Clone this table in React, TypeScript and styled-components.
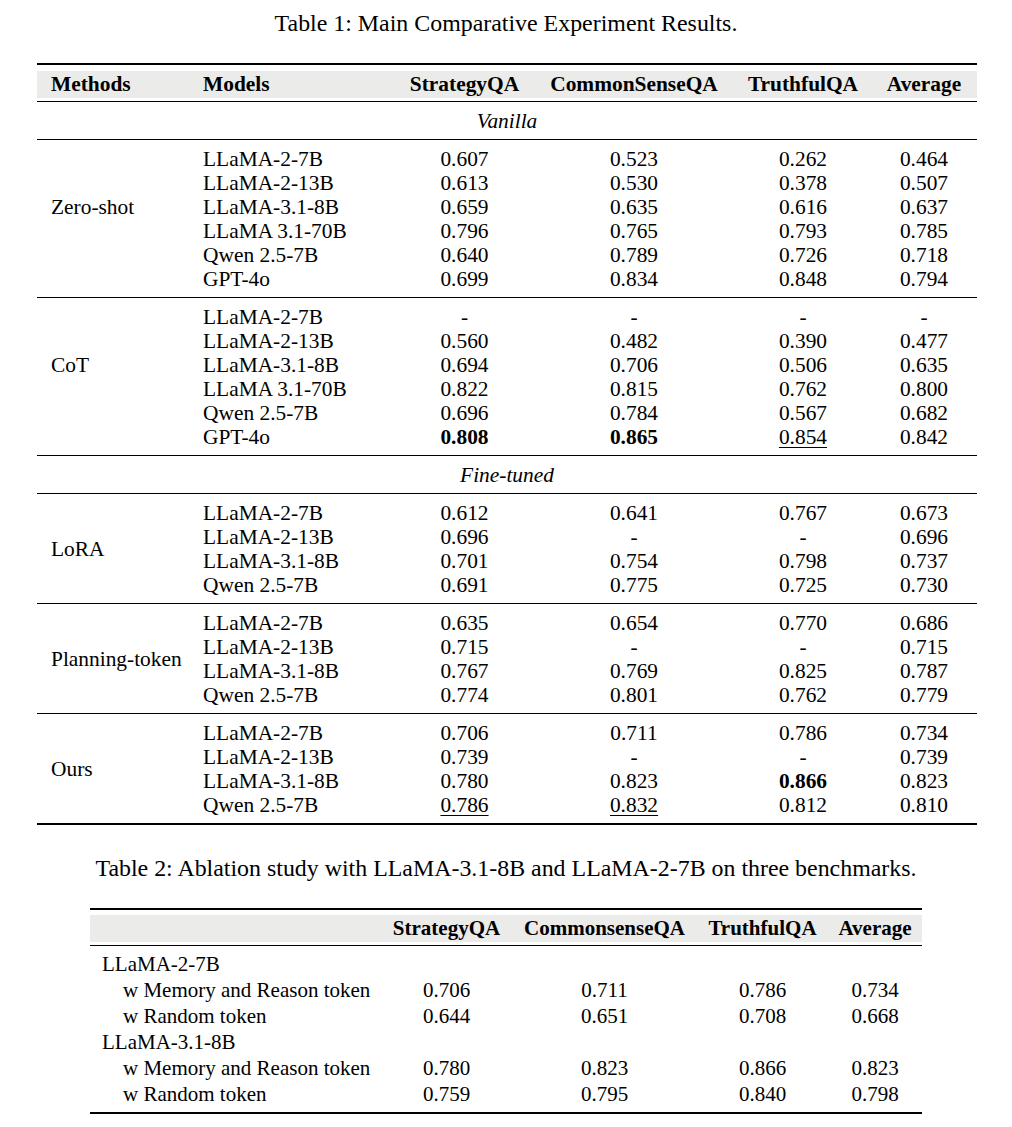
import React from "react";
import styled, { createGlobalStyle } from "styled-components";

const GlobalStyle = createGlobalStyle`
  html, body { margin: 0; padding: 0; background: #fff; }
  body { font-family: "Liberation Serif", "Times New Roman", serif; color: #000; }
`;

const Page = styled.div`
  width: 1012px;
  padding-top: 9px;
  display: flex;
  flex-direction: column;
`;

const Caption = styled.div<{ $top: number }>`
  margin-top: ${(p) => p.$top}px;
  font-size: 23.9px;
  line-height: 28px;
  text-align: center;
`;

/* ---------- Table 1 ---------- */
const T1_COLS = "153px 206px 137px 202px 136px 106px";

const Table1 = styled.div`
  width: 940px;
  margin: 26px 0 0 37px;
  border-top: 2px solid #000;
  border-bottom: 2px solid #000;
  font-size: 21.4px;
  line-height: 24px;
`;

const HeadWrap = styled.div<{ $gapTop: number }>`
  padding: ${(p) => p.$gapTop}px 0 3px;
  border-bottom: 1px solid #000;
`;

const HeadBand = styled.div<{ $cols: string }>`
  display: grid;
  grid-template-columns: ${(p) => p.$cols};
  background: #ebebe9;
  padding: 1px 0 2px;
  font-weight: bold;
`;

const Cell = styled.div<{
  $left?: number;
  $bold?: boolean;
  $under?: boolean;
}>`
  text-align: ${(p) => (p.$left !== undefined ? "left" : "center")};
  padding-left: ${(p) => p.$left ?? 0}px;
  font-weight: ${(p) => (p.$bold ? "bold" : "normal")};
  white-space: nowrap;
  & > span {
    text-decoration: ${(p) => (p.$under ? "underline" : "none")};
    text-decoration-thickness: 1px;
    text-underline-offset: 3px;
  }
`;

const HeadCell = styled(Cell)`
  font-weight: bold;
`;

const SectionRow = styled.div`
  padding: 7px 0 6px;
  border-bottom: 1px solid #000;
  text-align: center;
  font-style: italic;
`;

const Group = styled.div`
  display: grid;
  grid-template-columns: ${T1_COLS};
  padding: 7px 0 6px;
  border-bottom: 1px solid #000;
  &:last-child {
    border-bottom: none;
  }
`;

const MethodLabel = styled.div<{ $span: number }>`
  grid-column: 1;
  grid-row: 1 / span ${(p) => p.$span};
  align-self: center;
  padding-left: 14px;
  white-space: nowrap;
`;

const ModelCell = styled(Cell)`
  grid-column: 2;
`;

type Val = string | { v: string; b?: boolean; u?: boolean };

type Row = { model: string; vals: Val[] };
type GroupData = { method: string; span: number; rows: Row[] };

const G1: GroupData[] = [
  {
    method: "Zero-shot",
    span: 5,
    rows: [
      { model: "LLaMA-2-7B", vals: ["0.607", "0.523", "0.262", "0.464"] },
      { model: "LLaMA-2-13B", vals: ["0.613", "0.530", "0.378", "0.507"] },
      { model: "LLaMA-3.1-8B", vals: ["0.659", "0.635", "0.616", "0.637"] },
      { model: "LLaMA 3.1-70B", vals: ["0.796", "0.765", "0.793", "0.785"] },
      { model: "Qwen 2.5-7B", vals: ["0.640", "0.789", "0.726", "0.718"] },
      { model: "GPT-4o", vals: ["0.699", "0.834", "0.848", "0.794"] },
    ],
  },
  {
    method: "CoT",
    span: 5,
    rows: [
      { model: "LLaMA-2-7B", vals: ["-", "-", "-", "-"] },
      { model: "LLaMA-2-13B", vals: ["0.560", "0.482", "0.390", "0.477"] },
      { model: "LLaMA-3.1-8B", vals: ["0.694", "0.706", "0.506", "0.635"] },
      { model: "LLaMA 3.1-70B", vals: ["0.822", "0.815", "0.762", "0.800"] },
      { model: "Qwen 2.5-7B", vals: ["0.696", "0.784", "0.567", "0.682"] },
      {
        model: "GPT-4o",
        vals: [
          { v: "0.808", b: true },
          { v: "0.865", b: true },
          { v: "0.854", u: true },
          "0.842",
        ],
      },
    ],
  },
];

const G2: GroupData[] = [
  {
    method: "LoRA",
    span: 4,
    rows: [
      { model: "LLaMA-2-7B", vals: ["0.612", "0.641", "0.767", "0.673"] },
      { model: "LLaMA-2-13B", vals: ["0.696", "-", "-", "0.696"] },
      { model: "LLaMA-3.1-8B", vals: ["0.701", "0.754", "0.798", "0.737"] },
      { model: "Qwen 2.5-7B", vals: ["0.691", "0.775", "0.725", "0.730"] },
    ],
  },
  {
    method: "Planning-token",
    span: 4,
    rows: [
      { model: "LLaMA-2-7B", vals: ["0.635", "0.654", "0.770", "0.686"] },
      { model: "LLaMA-2-13B", vals: ["0.715", "-", "-", "0.715"] },
      { model: "LLaMA-3.1-8B", vals: ["0.767", "0.769", "0.825", "0.787"] },
      { model: "Qwen 2.5-7B", vals: ["0.774", "0.801", "0.762", "0.779"] },
    ],
  },
  {
    method: "Ours",
    span: 4,
    rows: [
      { model: "LLaMA-2-7B", vals: ["0.706", "0.711", "0.786", "0.734"] },
      { model: "LLaMA-2-13B", vals: ["0.739", "-", "-", "0.739"] },
      {
        model: "LLaMA-3.1-8B",
        vals: ["0.780", "0.823", { v: "0.866", b: true }, "0.823"],
      },
      {
        model: "Qwen 2.5-7B",
        vals: [{ v: "0.786", u: true }, { v: "0.832", u: true }, "0.812", "0.810"],
      },
    ],
  },
];

const ValCell: React.FC<{ val: Val }> = ({ val }) => {
  const o = typeof val === "string" ? { v: val } : val;
  return (
    <Cell $bold={o.b} $under={o.u}>
      <span>{o.v}</span>
    </Cell>
  );
};

const GroupBlock: React.FC<{ g: GroupData }> = ({ g }) => (
  <Group>
    <MethodLabel $span={g.span}>{g.method}</MethodLabel>
    {g.rows.map((r, i) => (
      <React.Fragment key={i}>
        <ModelCell $left={13}>{r.model}</ModelCell>
        {r.vals.map((v, j) => (
          <ValCell key={j} val={v} />
        ))}
      </React.Fragment>
    ))}
  </Group>
);

/* ---------- Table 2 ---------- */
const T2_COLS = "291px 131px 185px 131px 94px";

const Table2 = styled.div`
  width: 832px;
  margin: 26px auto 0;
  border-top: 2px solid #000;
  border-bottom: 2px solid #000;
  font-size: 21px;
  line-height: 24px;
`;

const T2Body = styled.div`
  padding: 5px 0 5px;
  display: grid;
  grid-template-columns: ${T2_COLS};
  grid-auto-rows: 26px;
  line-height: 26px;
`;

const ModelHeading = styled.div`
  grid-column: 1 / -1;
  padding-left: 12px;
`;

const VariantCell = styled.div`
  padding-left: 33px;
  white-space: nowrap;
`;

const T2_DATA = [
  {
    model: "LLaMA-2-7B",
    rows: [
      { name: "w Memory and Reason token", vals: ["0.706", "0.711", "0.786", "0.734"] },
      { name: "w Random token", vals: ["0.644", "0.651", "0.708", "0.668"] },
    ],
  },
  {
    model: "LLaMA-3.1-8B",
    rows: [
      { name: "w Memory and Reason token", vals: ["0.780", "0.823", "0.866", "0.823"] },
      { name: "w Random token", vals: ["0.759", "0.795", "0.840", "0.798"] },
    ],
  },
];

export default function App() {
  return (
    <>
      <GlobalStyle />
      <Page>
        <Caption $top={0}>Table 1: Main Comparative Experiment Results.</Caption>
        <Table1>
          <HeadWrap $gapTop={6}>
            <HeadBand $cols={T1_COLS}>
              <HeadCell $left={14}>Methods</HeadCell>
              <HeadCell $left={13}>Models</HeadCell>
              <HeadCell>StrategyQA</HeadCell>
              <HeadCell>CommonSenseQA</HeadCell>
              <HeadCell>TruthfulQA</HeadCell>
              <HeadCell>Average</HeadCell>
            </HeadBand>
          </HeadWrap>
          <SectionRow>Vanilla</SectionRow>
          {G1.map((g) => (
            <GroupBlock key={g.method} g={g} />
          ))}
          <SectionRow>Fine-tuned</SectionRow>
          {G2.map((g) => (
            <GroupBlock key={g.method} g={g} />
          ))}
        </Table1>

        <Caption $top={29}>
          Table 2: Ablation study with LLaMA-3.1-8B and LLaMA-2-7B on three benchmarks.
        </Caption>
        <Table2>
          <HeadWrap $gapTop={5}>
            <HeadBand $cols={T2_COLS}>
              <HeadCell $left={12}></HeadCell>
              <HeadCell>StrategyQA</HeadCell>
              <HeadCell>CommonsenseQA</HeadCell>
              <HeadCell>TruthfulQA</HeadCell>
              <HeadCell>Average</HeadCell>
            </HeadBand>
          </HeadWrap>
          <T2Body>
            {T2_DATA.map((m) => (
              <React.Fragment key={m.model}>
                <ModelHeading>{m.model}</ModelHeading>
                {m.rows.map((r) => (
                  <React.Fragment key={r.name}>
                    <VariantCell>{r.name}</VariantCell>
                    {r.vals.map((v, j) => (
                      <ValCell key={j} val={v} />
                    ))}
                  </React.Fragment>
                ))}
              </React.Fragment>
            ))}
          </T2Body>
        </Table2>
      </Page>
    </>
  );
}
